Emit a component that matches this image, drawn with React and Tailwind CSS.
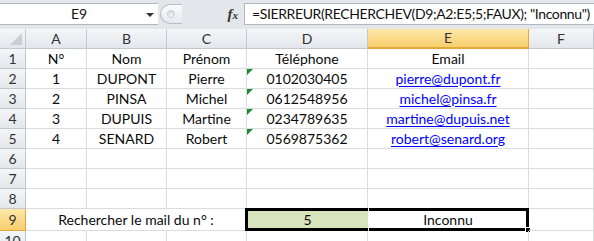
import React from "react";

/* ── Excel 2010 sheet: lookup with SIERREUR / RECHERCHEV ── */

const COLS = ["A", "B", "C", "D", "E", "F"];

const DATA = [
  ["N°", "Nom", "Prénom", "Téléphone", "Email"],
  ["1", "DUPONT", "Pierre", "0102030405", "pierre@dupont.fr"],
  ["2", "PINSA", "Michel", "0612548956", "michel@pinsa.fr"],
  ["3", "DUPUIS", "Martine", "0234789635", "martine@dupuis.net"],
  ["4", "SENARD", "Robert", "0569875362", "robert@senard.org"],
];

const grid = "grid grid-cols-[26px_61px_80px_80px_121px_161px_1fr]";
const cell = "relative flex items-center justify-center border-r border-b border-[#dadcdd] text-[#0a0a0a] whitespace-nowrap";
const rowHead = "flex items-center justify-center border-r border-b border-[#c3c8ce] bg-gradient-to-b from-[#f4f6f8] to-[#e3e7ec] text-[#333] text-[14px]";
const rowHeadSel = "flex items-center justify-center border-r border-b border-[#e2a93a] bg-gradient-to-b from-[#fde7a8] to-[#f7cf6c] text-[#333] text-[14px]";

function GreenFlag() {
  return (
    <svg className="absolute left-0 top-0" width="6" height="6" viewBox="0 0 6 6">
      <polygon points="0,0 6,0 0,6" fill="#1e8a32" />
    </svg>
  );
}

function FormulaBar() {
  return (
    <div className="h-[29px] bg-[#e3e6ea] pt-[3px] pb-[4px] flex">
      {/* name box */}
      <div className="relative w-[158px] h-[22px] bg-white border-t border-b border-[#b2b8c0] flex items-center justify-center text-[14px] text-[#111]">
        E9
        <svg className="absolute right-[4px] top-[9px]" width="8" height="5" viewBox="0 0 8 5">
          <polygon points="0,0 8,0 4,4" fill="#333" />
        </svg>
      </div>
      {/* grip + fx */}
      <div className="w-[86px] h-[22px] flex items-center pl-[2px]">
        <div className="h-[20px] w-[22px] rounded-l-full border border-r-0 border-[#b6bcc4] bg-gradient-to-b from-[#fafbfc] to-[#e6e9ed] flex items-center pl-[6px]">
          <div className="w-[8px] h-[8px] rounded-full bg-gradient-to-b from-[#d7dbe0] to-[#f5f6f8] border border-[#c8ccd2]" />
        </div>
        <div className="flex-1" />
        <span className="font-['Liberation_Serif'] italic font-bold text-[15px] text-[#333] pr-[6px]">
          f<span className="text-[11px]">x</span>
        </span>
      </div>
      {/* formula input */}
      <div className="flex-1 h-[22px] bg-white border border-r-0 border-[#b2b8c0] flex items-center pl-[7px] text-[14px] tracking-[-0.38px] text-[#111] whitespace-nowrap overflow-hidden">
        =SIERREUR(RECHERCHEV(D9;A2:E5;5;FAUX); "Inconnu")
      </div>
    </div>
  );
}

function HeaderRow() {
  return (
    <div className={`${grid} h-[20px]`}>
      <div className="relative border-r border-b border-[#c3c8ce] bg-gradient-to-b from-[#f4f6f8] to-[#e3e7ec]">
        <svg className="absolute right-[3px] bottom-[3px]" width="12" height="12" viewBox="0 0 12 12">
          <polygon points="12,0 12,12 0,12" fill="#c9ced4" />
        </svg>
      </div>
      {COLS.map((c) =>
        c === "E" ? (
          <div key={c} className="flex items-center justify-center border-r border-b-2 border-[#e2a93a] bg-gradient-to-b from-[#fde7a8] to-[#f7cf6c] text-[#333]">
            {c}
          </div>
        ) : (
          <div key={c} className="flex items-center justify-center border-r border-b border-[#c3c8ce] bg-gradient-to-b from-[#f4f6f8] to-[#e3e7ec] text-[#333]">
            {c}
          </div>
        )
      )}
    </div>
  );
}

function DataRow({ n, values }) {
  return (
    <div className={`${grid} h-[20px]`}>
      <div className={rowHead}>{n}</div>
      {values.map((v, i) => (
        <div key={i} className={cell}>
          {n > 1 && i === 3 && <GreenFlag />}
          {n > 1 && i === 4 ? (
            <span className="text-[#0000ff] underline underline-offset-[2px]">{v}</span>
          ) : (
            v
          )}
        </div>
      ))}
      <div className={cell} />
    </div>
  );
}

function EmptyRow({ n }) {
  return (
    <div className={`${grid} h-[20px]`}>
      <div className={rowHead}>{n}</div>
      {COLS.map((c) => (
        <div key={c} className={cell} />
      ))}
    </div>
  );
}

export default function App() {
  return (
    <div className="w-[594px] h-[241px] overflow-hidden bg-white font-['Lato',sans-serif] text-[14px] leading-none">
      <FormulaBar />
      <HeaderRow />
      {DATA.map((r, i) => (
        <DataRow key={i} n={i + 1} values={r} />
      ))}
      <EmptyRow n={6} />
      <EmptyRow n={7} />
      <EmptyRow n={8} />

      {/* row 9 – lookup */}
      <div className={`${grid} h-[22px]`}>
        <div className={rowHeadSel}>9</div>
        <div className={`${cell} col-span-3`}>Rechercher le mail du n° :</div>
        <div className="relative flex items-center justify-center border-b border-[#dadcdd] bg-[#d8e4bc] text-[#0a0a0a]">
          <div className="absolute -left-[2px] -top-[1px] -bottom-[1px] right-0 border-l-[3px] border-t-[3px] border-b-[3px] border-black" />
          5
        </div>
        <div className="relative flex items-center justify-center border-r border-b border-[#dadcdd] text-[#0a0a0a]">
          <div className="absolute left-[1px] -top-[1px] -bottom-[1px] -right-[1px] border-t-[3px] border-b-[3px] border-r-[3px] border-black" />
          <div className="absolute -right-[3px] -bottom-[3px] w-[6px] h-[6px] bg-black border border-white" />
          Inconnu
        </div>
        <div className={cell} />
      </div>
      <EmptyRow n={10} />
    </div>
  );
}
